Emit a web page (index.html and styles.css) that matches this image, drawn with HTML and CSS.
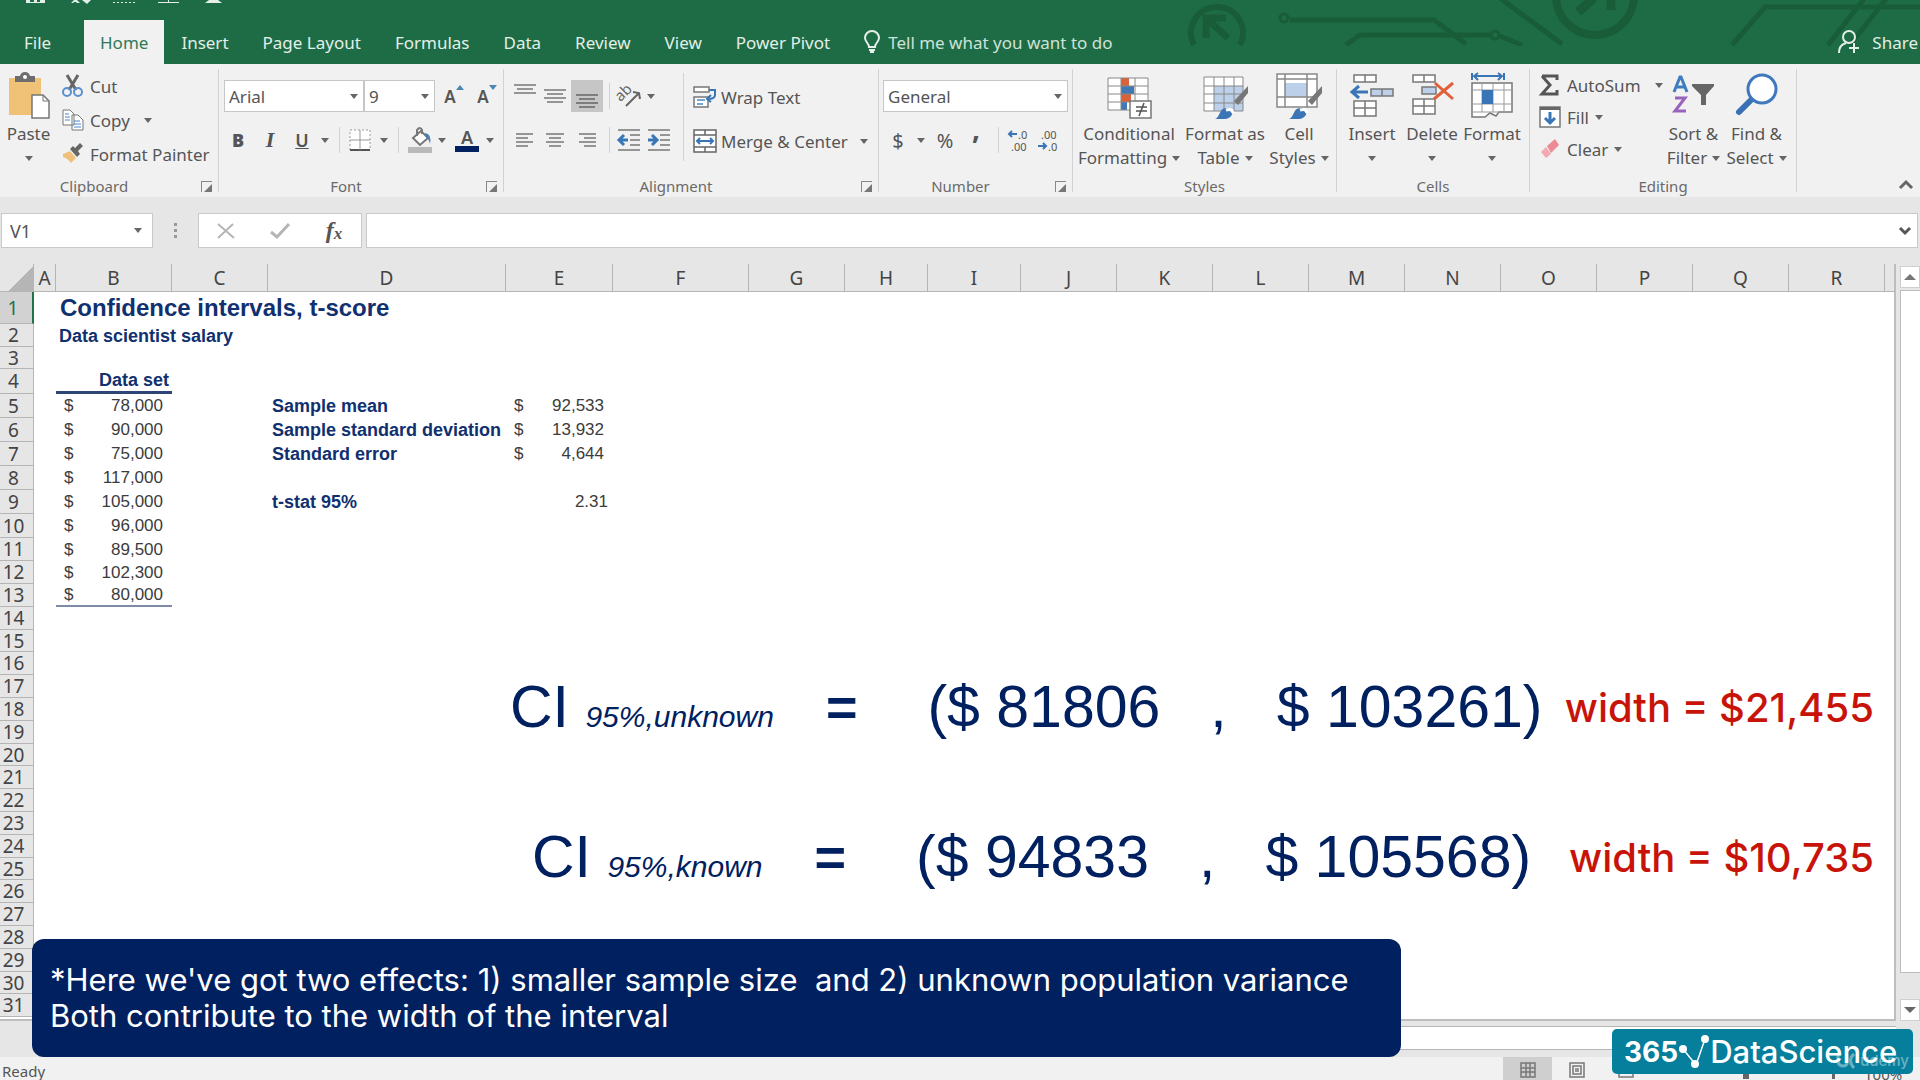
FILE: index.html
```html
<!DOCTYPE html>
<html lang="en">
<head>
  <meta charset="UTF-8" />
  <meta name="viewport" content="width=device-width, initial-scale=1.0" />
  <title>Confidence intervals, t-score</title>
  <link rel="stylesheet" href="styles.css">
</head>
<body>
  <header class="titlebar">
    <svg class="quick" width="230" height="5" viewBox="0 0 230 5" fill="#e3efe8">
      <path d="M26 0h4v2h4V0h3v2h3V0h5v3H26z" />
      <path d="M71 3l3-3h3l3 3h-3l-1-1h-2l-1 1zM82 0h9l-4 4z" />
      <path d="M113 2h2v1h-2zM117 2h2v1h-2zM121 2h2v1h-2zM125 2h2v1h-2zM129 2h2v1h-2zM133 2h2v1h-2zM158 2h21v1h-21zM168 0h1v2h-1z" />
      <path d="M205 3l4-3h9l4 3z" />
    </svg>
    <svg class="circuit" width="740" height="46" viewBox="1180 0 740 46" fill="none" stroke="#185c38" stroke-width="5">
      <path d="M1194 45a26 26 0 1 1 46 0" stroke-width="6" />
      <path d="M1206 38V18h20M1208 20l20 18" stroke-width="7" />
      <circle cx="1284" cy="18" r="4" stroke-width="3" />
      <path d="M1290 20h144l32 24M1346 45l14-10h132M1500 36l22 9" />
      <circle cx="1495" cy="35" r="4" stroke-width="3" />
      <path d="M1500 -2l62 46" />
      <circle cx="1595" cy="-4" r="39" stroke-width="8" />
      <path d="M1578 12l16-14M1611 -2v12" stroke-width="9" />
      <path d="M1732 45l33-38h155M1828 45l36-46M1850 45l36-46" />
    </svg>
    <nav class="tabs">
      <button class="tab file">File</button>
      <button class="tab active">Home</button>
      <button class="tab">Insert</button>
      <button class="tab">Page Layout</button>
      <button class="tab">Formulas</button>
      <button class="tab">Data</button>
      <button class="tab">Review</button>
      <button class="tab">View</button>
      <button class="tab">Power Pivot</button>
      <button class="tab tell">
        <svg width="16" height="24" viewBox="0 0 16 24" fill="none" stroke="#e3efe8" stroke-width="2"><path d="M5 17c0-4-4-5-4-9a7 7 0 0 1 14 0c0 4-4 5-4 9zM5 20h6M6 22h4" /></svg>
        Tell me what you want to do
      </button>
      <button class="tab share">
        <svg width="22" height="24" viewBox="0 0 22 24" fill="none" stroke="#e3efe8" stroke-width="2"><circle cx="11" cy="7" r="6" /><path d="M1 23c0-6 3-9 7-10M16 13v10M11 18h10" /></svg>
        Share
      </button>
    </nav>
  </header>

  <section class="ribbon">
    <div class="group clipboard">
      <div class="body">
        <button class="big paste">
          <svg width="44" height="48" viewBox="0 0 44 48"><path d="M2 6h32v37H2z" fill="#f0c277" /><path d="M8 4h5q1-4 5-4t5 4h5v6H8z" fill="#6d6d6d" /><circle cx="18" cy="5" r="2" fill="#fff" /><path d="M25 23h11l6 6v17H25z" fill="#fff" stroke="#777" stroke-width="1.5" /><path d="M36 23v6h6" fill="none" stroke="#777" /></svg>
          <span>Paste</span><i class="arrow"></i>
        </button>
        <div class="stack">
          <button class="small">
            <svg width="22" height="22" viewBox="0 0 22 22" fill="none" stroke-width="2"><path d="M5 0l9 15M16 0L7 15" stroke="#666" stroke-width="3" /><circle cx="5" cy="17" r="4" stroke="#5b8fcf" /><circle cx="16" cy="17" r="4" stroke="#5b8fcf" /></svg>Cut</button>
          <button class="small">
            <svg width="22" height="22" viewBox="0 0 22 22" fill="#fff" stroke="#777"><path d="M1 1h7l4 4v11H1zM10 6h6l5 5v10H10z" /><path d="M3 5h4M3 8h5M3 11h5M12 12h6M12 15h7M12 18h7" stroke="#4a86c8" /></svg>Copy<i class="arrow far"></i></button>
          <button class="small">
            <svg width="22" height="22" viewBox="0 0 22 22"><path d="M1 11l7-3 6 7-5 5c-2-3-5-5-8-6z" fill="#efc07c" /><path d="M8 6l7 8 3-3-2-3 5-5-3-3-5 5-2-2z" fill="#666" /></svg>Format Painter</button>
        </div>
      </div>
      <div class="label"><span>Clipboard</span><button class="launch" aria-label="Clipboard settings"></button></div>
    </div>

    <div class="group font">
      <div class="body lines">
        <div class="row font-top">
          <span class="combo"><select aria-label="Font"><option>Arial</option></select></span>
          <span class="combo"><select aria-label="Font size"><option>9</option></select></span>
          <button class="ic grow">A<svg width="8" height="5" viewBox="0 0 8 5"><path d="M0 5l4-5 4 5z" fill="#4a86b8" /></svg></button>
          <button class="ic grow">A<svg width="8" height="5" viewBox="0 0 8 5"><path d="M0 0h8L4 5z" fill="#4a86b8" /></svg></button>
        </div>
        <div class="row font-bottom">
          <button class="ic"><b>B</b></button>
          <button class="ic italic">I</button>
          <button class="ic under">U</button>
          <i class="arrow"></i><i class="sep"></i>
          <button class="ic" aria-label="Borders"><svg width="22" height="22" viewBox="0 0 22 22" fill="#fff" stroke="#999"><path d="M1 1h20v20H1z" stroke-dasharray="2 2" /><path d="M1 21h20" stroke="#555" stroke-width="2" /><path d="M11 1v20M1 11h20" /></svg></button>
          <i class="arrow"></i><i class="sep"></i>
          <button class="ic" aria-label="Fill color"><svg width="24" height="26" viewBox="0 0 24 26"><path d="M5 11l8-7 7 7-8 7z" fill="#fff" stroke="#777" stroke-width="2" /><path d="M9 9V3q3-4 5 0v4" fill="none" stroke="#777" stroke-width="2" /><path d="M17 6q7 1 5 11-1-5-4-7z" fill="#4a7fb5" /><path d="M0 20h24v6H0z" fill="#b9b9b9" /></svg></button>
          <i class="arrow"></i>
          <button class="ic color">A</button>
          <i class="arrow"></i>
        </div>
      </div>
      <div class="label"><span>Font</span><button class="launch" aria-label="Font settings"></button></div>
    </div>

    <div class="group alignment">
      <div class="body">
        <div class="lines">
          <div class="row align-row">
            <button class="ic" aria-label="Top align"><svg width="22" height="24" viewBox="0 0 22 24" stroke="#777" stroke-width="1.5"><path d="M0 1h22M3 5h16M0 9h22" /></svg></button>
            <button class="ic" aria-label="Middle align"><svg width="22" height="24" viewBox="0 0 22 24" stroke="#777" stroke-width="1.5"><path d="M0 6h22M3 10h16M0 14h22M3 18h16" /></svg></button>
            <button class="ic pressed" aria-label="Bottom align"><svg width="22" height="24" viewBox="0 0 22 24" stroke="#666" stroke-width="1.5"><path d="M0 11h22M3 15h16M0 19h22M3 23h16" /></svg></button>
            <i class="sep"></i>
            <button class="ic" aria-label="Orientation"><svg width="24" height="24" viewBox="0 0 24 24"><text x="0" y="14" class="ab" transform="rotate(-45 7 12)">ab</text><path d="M9 22L22 9M16 8l6 1 1 6" fill="none" stroke="#666" stroke-width="2" /></svg></button>
            <i class="arrow"></i>
          </div>
          <div class="row align-row">
            <button class="ic" aria-label="Align left"><svg width="18" height="18" viewBox="0 0 18 18" stroke="#777" stroke-width="1.5"><path d="M0 3h17M0 7h12M0 11h17M0 15h12" /></svg></button>
            <button class="ic" aria-label="Center"><svg width="18" height="18" viewBox="0 0 18 18" stroke="#777" stroke-width="1.5"><path d="M0 3h18M3 7h12M0 11h18M3 15h12" /></svg></button>
            <button class="ic" aria-label="Align right"><svg width="18" height="18" viewBox="0 0 18 18" stroke="#777" stroke-width="1.5"><path d="M1 3h17M6 7h12M1 11h17M6 15h12" /></svg></button>
            <i class="sep"></i>
            <button class="ic" aria-label="Decrease indent"><svg width="22" height="22" viewBox="0 0 22 22" stroke="#777" stroke-width="1.5"><path d="M0 1h22M12 6h10M12 11h10M12 16h10M0 21h22" /><path d="M10 11H2M6 6l-5 5 5 5" fill="none" stroke="#3a76b5" stroke-width="3" /></svg></button>
            <button class="ic" aria-label="Increase indent"><svg width="22" height="22" viewBox="0 0 22 22" stroke="#777" stroke-width="1.5"><path d="M0 1h22M12 6h10M12 11h10M12 16h10M0 21h22" /><path d="M0 11h8M4 6l5 5-5 5" fill="none" stroke="#3a76b5" stroke-width="3" /></svg></button>
          </div>
        </div>
        <i class="sep tall"></i>
        <div class="lines">
          <div class="row"><button class="small tight">
            <svg width="24" height="24" viewBox="0 0 24 24" fill="#fff" stroke="#777" stroke-width="1.5"><path d="M1 2h15v5H1zM1 12h14v10H1z" /><path d="M4 15h8M4 19h6" stroke="#4a86c8" /><path d="M16 5h6v5q0 4-7 4M18 10l-4 4 4 3" fill="none" stroke="#3a76b5" stroke-width="2" /></svg>Wrap Text</button></div>
          <div class="row"><button class="small tight">
            <svg width="24" height="24" viewBox="0 0 24 24" fill="#fff" stroke="#666" stroke-width="1.5"><path d="M1 1h22v22H1zM1 6h22M1 18h22M12 1v5M12 18v5" /><path d="M4 12h16M7 9l-3 3 3 3M17 9l3 3-3 3" fill="none" stroke="#3a76b5" stroke-width="2" /></svg>Merge &amp; Center<i class="arrow far"></i></button></div>
        </div>
      </div>
      <div class="label"><span>Alignment</span><button class="launch" aria-label="Alignment settings"></button></div>
    </div>

    <div class="group number">
      <div class="body lines">
        <div class="row"><span class="combo wide"><select aria-label="Number format"><option>General</option></select></span></div>
        <div class="row number-row">
          <button class="ic sym">$</button><i class="arrow"></i>
          <button class="ic sym">%</button>
          <button class="ic comma">,</button>
          <i class="sep"></i>
          <button class="ic" aria-label="Increase decimal"><svg width="24" height="24" viewBox="0 0 24 24"><path d="M9 6H1M4 3L1 6l3 3" fill="none" stroke="#3a76b5" stroke-width="2" /><text x="10" y="11" class="dec">.0</text><text x="3" y="23" class="dec">.00</text></svg></button>
          <button class="ic" aria-label="Decrease decimal"><svg width="24" height="24" viewBox="0 0 24 24"><path d="M0 18h8M5 15l3 3-3 3" fill="none" stroke="#3a76b5" stroke-width="2" /><text x="3" y="11" class="dec">.00</text><text x="10" y="23" class="dec">.0</text></svg></button>
        </div>
      </div>
      <div class="label"><span>Number</span><button class="launch" aria-label="Number settings"></button></div>
    </div>

    <div class="group styles">
      <div class="body">
        <button class="big">
          <svg width="46" height="48" viewBox="0 0 46 48"><path d="M2 6h40v32H2z" fill="#fff" /><path d="M15 6h8v8h-8zM15 22h10v8H15z" fill="#d9623b" /><path d="M15 14h13v8H15zM15 30h6v8h-6z" fill="#4078b5" /><path d="M2 6h40v32H2zM2 14h40M2 22h40M2 30h40M15 6v32M29 6v32" fill="none" stroke="#888" /><path d="M24 29h21v17H24z" fill="#fff" stroke="#777" stroke-width="1.5" /><path d="M30 35h11M30 39h11M38 31l-5 13" stroke="#555" stroke-width="1.5" /></svg>
          <span>Conditional</span><span>Formatting<i class="arrow"></i></span>
        </button>
        <button class="big">
          <svg width="46" height="48" viewBox="0 0 46 48"><path d="M2 5h39v34H2z" fill="#fff" /><path d="M12 14h29v25H12z" fill="#bdd0ea" /><path d="M2 5h39v34H2zM2 14h39M2 22h39M2 31h39M12 5v34M22 5v34M32 5v34" fill="none" stroke="#888" /><path d="M46 14l-14 15 4 4 10-12z" fill="#777" /><path d="M13 47c5-1 4-11 11-11 8 0 9 10-1 11z" fill="#3a76b5" /><path d="M24 38q6-2 7 3" stroke="#fff" stroke-width="3" fill="none" /></svg>
          <span>Format as</span><span>Table<i class="arrow"></i></span>
        </button>
        <button class="big">
          <svg width="46" height="48" viewBox="0 0 46 48"><path d="M1 2h40v33H1z" fill="#fff" /><path d="M9 11h22v14H9z" fill="#bdd0ea" /><path d="M1 2h40v33H1zM1 7h40M1 25h40M9 2v33M31 2v33" fill="none" stroke="#888" stroke-width="1.5" /><path d="M46 14l-14 15 4 4 10-12z" fill="#777" /><path d="M13 47c5-1 4-11 11-11 8 0 9 10-1 11z" fill="#3a76b5" /><path d="M24 38q6-2 7 3" stroke="#fff" stroke-width="3" fill="none" /></svg>
          <span>Cell</span><span>Styles<i class="arrow"></i></span>
        </button>
      </div>
      <div class="label"><span>Styles</span></div>
    </div>

    <div class="group cells">
      <div class="body">
        <button class="big">
          <svg width="46" height="48" viewBox="0 0 46 48" fill="#fff" stroke="#777" stroke-width="1.5"><path d="M5 3h22v7H5zM16 3v7M5 29h22v15H5zM5 36h22M16 29v15" /><path d="M22 17h22v7H22zM33 17v7" fill="#bdd0ea" /><path d="M19 20H4M10 14l-7 6 7 6" fill="none" stroke="#3a76b5" stroke-width="3" /></svg>
          <span>Insert</span><i class="arrow"></i>
        </button>
        <button class="big">
          <svg width="46" height="48" viewBox="0 0 46 48" fill="#fff" stroke="#777" stroke-width="1.5"><path d="M4 3h22v7H4zM15 3v7M4 27h22v15H4zM4 34h22M15 27v15" /><path d="M13 15h14v7H13z" fill="#bdd0ea" /><path d="M26 11l18 16M44 11L25 27" fill="none" stroke="#e0603a" stroke-width="3" /></svg>
          <span>Delete</span><i class="arrow"></i>
        </button>
        <button class="big">
          <svg width="46" height="48" viewBox="0 0 46 48"><path d="M3 11h40v29H30l-3 4-6-3-5 4H3z" fill="#fff" stroke="#777" stroke-width="1.5" /><path d="M3 18h40M3 32h40M13 11v29M24 11v29M35 11v29M3 40h40" stroke="#999" fill="none" /><path d="M13 18h11v14H13z" fill="#3a76b5" /><path d="M3 1v7M35 1v7M5 4h28M9 1L5 4l4 4M29 1l4 3-4 4" fill="none" stroke="#3a76b5" stroke-width="2" /></svg>
          <span>Format</span><i class="arrow"></i>
        </button>
      </div>
      <div class="label"><span>Cells</span></div>
    </div>

    <div class="group editing">
      <div class="body">
        <div class="stack">
          <button class="small"><svg width="22" height="22" viewBox="0 0 22 22"><path d="M3 2h15v4M3 2l8 9-8 9h15v-4" fill="none" stroke="#555" stroke-width="3" /></svg>AutoSum<i class="arrow far"></i></button>
          <button class="small"><svg width="22" height="22" viewBox="0 0 22 22"><path d="M1 1h20v20H1z" fill="#fff" stroke="#777" stroke-width="1.5" /><path d="M1 1h20v3H1z" fill="#666" /><path d="M11 6v11M6 12l5 5 5-5" fill="none" stroke="#3a76b5" stroke-width="3" /></svg>Fill<i class="arrow"></i></button>
          <button class="small"><svg width="22" height="22" viewBox="0 0 22 22"><path d="M8 8l8-7 4 6-8 8z" fill="#ec8b96" /><path d="M7 9l5 7-5 4-5-6z" fill="#f2a9b0" /></svg>Clear<i class="arrow"></i></button>
        </div>
        <button class="big">
          <svg width="46" height="48" viewBox="0 0 46 48" fill="none" stroke-width="3"><path d="M3 20L9 5h1l6 15M5 15h9" stroke="#3f7cc0" /><path d="M4 26h10L4 39h11" stroke="#9a63bb" /><path d="M21 12h22v2l-8 9v10h-5V23l-9-9z" fill="#666" /></svg>
          <span>Sort &amp;</span><span>Filter<i class="arrow"></i></span>
        </button>
        <button class="big">
          <svg width="46" height="48" viewBox="0 0 46 48"><path d="M17 28L5 40" stroke="#3a70b5" stroke-width="6" stroke-linecap="round" /><circle cx="28" cy="17" r="14" fill="#fff" stroke="#3f78bd" stroke-width="3" /></svg>
          <span>Find &amp;</span><span>Select<i class="arrow"></i></span>
        </button>
      </div>
      <div class="label"><span>Editing</span></div>
    </div>
    <button class="collapse" aria-label="Collapse the ribbon"><svg width="14" height="9" viewBox="0 0 14 9" fill="none" stroke="#666" stroke-width="3"><path d="M1 8l6-6 6 6" /></svg></button>
  </section>

  <section class="formula">
    <div class="namebox"><input type="text" value="V1" aria-label="Name box" /><i class="arrow"></i></div>
    <svg class="dots" width="4" height="18" viewBox="0 0 4 18" fill="#999"><path d="M0 1h3v3H0zM0 7h3v3H0zM0 13h3v3H0z" /></svg>
    <div class="fx">
      <button aria-label="Cancel"><svg width="18" height="16" viewBox="0 0 18 16" fill="none" stroke="#b5b5b5" stroke-width="2"><path d="M1 1l16 14M16 1L1 15" /></svg></button>
      <button aria-label="Enter"><svg width="20" height="16" viewBox="0 0 20 16" fill="none" stroke="#b5b5b5" stroke-width="3"><path d="M1 9l6 5L19 1" /></svg></button>
      <button class="fn">f<small>x</small></button>
    </div>
    <div class="bar"><input type="text" aria-label="Formula bar" /><svg width="12" height="8" viewBox="0 0 12 8" fill="none" stroke="#555" stroke-width="3"><path d="M1 1l5 5 5-5" /></svg></div>
  </section>

  <main class="workspace">
    <div class="sheet">
      <table>
        <colgroup>
          <col class="c-num"><col class="c-a"><col class="c-b"><col class="c-std"><col class="c-d"><col class="c-e"><col class="c-f"><col class="c-std"><col class="c-h"><col class="c-i"><col class="c-std"><col class="c-std"><col class="c-std"><col class="c-std"><col class="c-std"><col class="c-std"><col class="c-std"><col class="c-std"><col class="c-std"><col>
        </colgroup>
        <thead>
          <tr><th class="corner"></th><th>A</th><th>B</th><th>C</th><th>D</th><th>E</th><th>F</th><th>G</th><th>H</th><th>I</th><th>J</th><th>K</th><th>L</th><th>M</th><th>N</th><th>O</th><th>P</th><th>Q</th><th>R</th><th></th></tr>
        </thead>
        <tbody>
          <tr class="r-title"><th class="selected">1</th><td></td><td class="title" colspan="18">Confidence intervals, t-score</td></tr>
          <tr><th>2</th><td></td><td class="head sub" colspan="18">Data scientist salary</td></tr>
          <tr class="short"><th>3</th><td colspan="19"></td></tr>
          <tr class="r-head"><th>4</th><td></td><td class="head right line">Data set</td><td colspan="17"></td></tr>
          <tr class="mid"><th>5</th><td></td><td><span class="money"><i>$</i>78,000</span></td><td></td><td class="head">Sample mean</td><td><span class="money"><i>$</i>92,533</span></td><td colspan="14"></td></tr>
          <tr class="mid"><th>6</th><td></td><td><span class="money"><i>$</i>90,000</span></td><td></td><td class="head">Sample standard deviation</td><td><span class="money"><i>$</i>13,932</span></td><td colspan="14"></td></tr>
          <tr class="mid"><th>7</th><td></td><td><span class="money"><i>$</i>75,000</span></td><td></td><td class="head">Standard error</td><td><span class="money"><i>$</i>4,644</span></td><td colspan="14"></td></tr>
          <tr class="mid"><th>8</th><td></td><td><span class="money"><i>$</i>117,000</span></td><td colspan="17"></td></tr>
          <tr class="mid"><th>9</th><td></td><td><span class="money"><i>$</i>105,000</span></td><td></td><td class="head">t-stat 95%</td><td class="right">2.31</td><td colspan="14"></td></tr>
          <tr class="mid"><th>10</th><td></td><td><span class="money"><i>$</i>96,000</span></td><td colspan="17"></td></tr>
          <tr><th>11</th><td></td><td><span class="money"><i>$</i>89,500</span></td><td colspan="17"></td></tr>
          <tr><th>12</th><td></td><td><span class="money"><i>$</i>102,300</span></td><td colspan="17"></td></tr>
          <tr><th>13</th><td></td><td class="line end"><span class="money"><i>$</i>80,000</span></td><td colspan="17"></td></tr>
          <tr><th>14</th><td colspan="19"></td></tr>
          <tr class="short"><th>15</th><td colspan="19"></td></tr>
          <tr><th>16</th><td colspan="19"></td></tr>
          <tr><th>17</th><td colspan="19"></td></tr>
          <tr><th>18</th><td colspan="19"></td></tr>
          <tr><th>19</th><td colspan="19"></td></tr>
          <tr class="short"><th>20</th><td colspan="19"></td></tr>
          <tr><th>21</th><td colspan="19"></td></tr>
          <tr><th>22</th><td colspan="19"></td></tr>
          <tr><th>23</th><td colspan="19"></td></tr>
          <tr><th>24</th><td colspan="19"></td></tr>
          <tr class="short"><th>25</th><td colspan="19"></td></tr>
          <tr><th>26</th><td colspan="19"></td></tr>
          <tr><th>27</th><td colspan="19"></td></tr>
          <tr><th>28</th><td colspan="19"></td></tr>
          <tr><th>29</th><td colspan="19"></td></tr>
          <tr class="short"><th>30</th><td colspan="19"></td></tr>
          <tr><th>31</th><td colspan="19"></td></tr>
        </tbody>
      </table>

      <div class="results">
        <p class="ci"><span>CI <em>95%,unknown</em></span><b>=</b><span>($ 81806</span><span class="comma-gap">,</span><span>$ 103261)</span><strong>width = $21,455</strong></p>
        <p class="ci known"><span>CI <em>95%,known</em></span><b>=</b><span>($ 94833</span><span class="comma-gap">,</span><span>$ 105568)</span><strong>width = $10,735</strong></p>
      </div>
    </div>
    <div class="scroll">
      <button aria-label="Scroll up"><svg width="12" height="6" viewBox="0 0 12 6"><path d="M0 6l6-6 6 6z" fill="#777" /></svg></button>
      <div class="thumb"></div>
      <button aria-label="Scroll down"><svg width="12" height="6" viewBox="0 0 12 6"><path d="M0 0h12L6 6z" fill="#666" /></svg></button>
    </div>
  </main>

  <div class="sheet-tabs"><div class="strip"></div></div>

  <footer class="status">
    <span class="ready">Ready</span>
    <button class="view on" aria-label="Normal"><svg width="16" height="16" viewBox="0 0 16 16" fill="none" stroke="#777" stroke-width="1.5"><path d="M1 1h14v14H1zM1 6h14M1 10h14M6 1v14M10 1v14" /></svg></button>
    <button class="view" aria-label="Page layout"><svg width="16" height="16" viewBox="0 0 16 16" fill="none" stroke="#777" stroke-width="1.5"><path d="M1 1h14v14H1zM4 4h8v8H4zM6 7h4M6 9h4" /></svg></button>
    <button class="view" aria-label="Page break"><svg width="16" height="16" viewBox="0 0 16 16" fill="none" stroke="#777" stroke-width="1.5"><path d="M1 1h14v14H1zM1 8h5V1M10 1v7h5" /></svg></button>
    <svg class="zoom" width="160" height="22" viewBox="0 0 160 22" fill="#666"><path d="M67 15h6v7h-6zM156 15h3v7h-3z" /></svg>
    <span class="percent">100%</span>
  </footer>

  <aside class="note">*Here we've got two effects: 1) smaller sample size &nbsp;and 2) unknown population variance<br>Both contribute to the width of the interval</aside>

  <div class="brand">
    <b>365</b>
    <svg width="32" height="36" viewBox="0 0 32 36" fill="#fff"><path d="M5 15l13 16 9-26" fill="none" stroke="#fff" stroke-width="1.5" /><circle cx="5" cy="15" r="4" /><circle cx="17" cy="30" r="4" /><circle cx="27" cy="5" r="4" /></svg>
    <span>DataScience</span>
    <small class="mark"><svg width="20" height="18" viewBox="0 0 20 18" fill="none" stroke="#fff" stroke-width="3"><path d="M2 2v7a5 5 0 0 0 9 3V2M18 2q-7 6 0 14" /></svg>udemy</small>
  </div>
</body>
</html>
```
FILE: styles.css
```css
* {
  box-sizing: border-box;
}
body {
  margin: 0;
  height: 100vh;
  display: flex;
  flex-direction: column;
  overflow: hidden;
  position: relative;
  background: #e6e6e6;
  color: #555;
  font-family: "Noto Sans", "Open Sans", sans-serif;
  font-size: 17px;
}
button, input, select {
  font: inherit;
  color: inherit;
  background: none;
  border: none;
  border-radius: 0;
  padding: 0;
  margin: 0;
  outline: none;
}
svg {
  display: block;
  flex: none;
  overflow: visible;
}

/* title bar and tabs */
.titlebar {
  flex: none;
  position: relative;
  height: 64px;
  background: #1e6c46;
  color: #e3efe8;
}
.quick {
  position: absolute;
  left: 0;
  top: 0;
}
.circuit {
  position: absolute;
  right: 0;
  top: 0;
  overflow: hidden;
}
.tabs {
  position: relative;
  display: flex;
  padding-top: 20px;
}
.tab {
  height: 44px;
  padding: 0 17px;
  display: flex;
  align-items: center;
  white-space: nowrap;
}
.tab.file {
  width: 84px;
  padding-left: 24px;
}
.tab.active {
  background: #f1f1f1;
  color: #2f7a57;
  padding: 0 16px;
}
.tab.tell {
  gap: 8px;
  color: #cfe2d7;
}
.tab.share {
  gap: 12px;
  margin-left: auto;
  padding: 0 2px;
}

/* ribbon */
.ribbon {
  flex: none;
  display: flex;
  height: 133px;
  padding: 5px 0;
  background: #f1f1f1;
}
.group {
  display: flex;
  flex-direction: column;
  border-right: 1px solid #d2d2d2;
}
.clipboard { width: 219px; }
.font { width: 285px; }
.alignment { width: 375px; }
.number { width: 194px; }
.styles { width: 264px; }
.cells { width: 193px; }
.editing { width: 267px; }
.body {
  flex: 1;
  min-height: 0;
  display: flex;
}
.label {
  flex: none;
  position: relative;
  height: 16px;
  line-height: 20px;
  padding-right: 30px;
  font-size: 15px;
  text-align: center;
  color: #6a6a6a;
}
.styles .label, .cells .label, .editing .label {
  padding-right: 0;
}
.launch {
  position: absolute;
  right: 6px;
  top: 5px;
  width: 11px;
  height: 11px;
  border: solid #888;
  border-width: 1px 0 0 1px;
}
.launch::after {
  content: "";
  position: absolute;
  right: 0;
  bottom: 0;
  border: 4px solid transparent;
  border-right-color: #777;
  border-bottom-color: #777;
}
.arrow {
  display: inline-block;
  flex: none;
  width: 8px;
  border: 4px solid transparent;
  border-top: 5px solid #666;
  border-bottom: none;
}
.sep {
  width: 1px;
  height: 26px;
  background: #d2d2d2;
}
.sep.tall {
  height: 88px;
  margin: 4px 9px 0 18px;
}
.big {
  display: flex;
  flex-direction: column;
  align-items: center;
  line-height: 24px;
  padding-top: 3px;
  white-space: nowrap;
}
.big svg {
  margin-bottom: 2px;
}
.big > .arrow {
  margin-top: 10px;
}
.big span .arrow {
  margin: 0 0 3px 5px;
}
.paste {
  width: 57px;
}
.stack {
  display: flex;
  flex-direction: column;
  padding-left: 5px;
}
.small {
  display: flex;
  flex: none;
  align-items: center;
  gap: 6px;
  height: 34px;
  white-space: nowrap;
}
.small .far {
  margin-left: 8px;
}
.small.tight {
  gap: 4px;
}
.editing .small {
  height: 32px;
}
.lines {
  display: flex;
  flex-direction: column;
  gap: 12px;
  padding-top: 11px;
}
.row {
  flex: none;
  height: 32px;
  display: grid;
  align-items: center;
  justify-items: center;
  justify-content: start;
}
.ic {
  display: flex;
  align-items: center;
  justify-content: center;
}
.font .lines {
  padding-left: 5px;
}
.font-top {
  grid-template-columns: 140px 71px 38px 28px;
}
.font-bottom {
  grid-template-columns: 28px 36px 28px 18px 10px 32px 16px 12px 32px 12px 38px 8px;
}
.combo {
  position: relative;
  width: 100%;
}
.combo.wide {
  width: 185px;
}
.combo select {
  appearance: none;
  display: block;
  width: 100%;
  height: 32px;
  padding: 0 4px;
  background: #fff;
  border: 1px solid #c6c6c6;
}
.combo::after, .namebox .arrow {
  content: "";
  position: absolute;
  right: 6px;
  top: 14px;
  border: 4px solid transparent;
  border-top: 5px solid #666;
  border-bottom: none;
}
.grow {
  align-items: flex-start;
  font-weight: 600;
}
.font-bottom .ic {
  font-size: 18px;
  font-weight: 600;
}
.font-bottom .italic {
  font-family: "Liberation Serif", serif;
  font-style: italic;
  font-weight: 700;
  font-size: 22px;
}
.under {
  text-decoration: underline;
}
.font-bottom .color {
  height: 24px;
  width: 24px;
  border-bottom: 6px solid #002060;
  line-height: 18px;
}
.alignment .lines {
  padding-left: 6px;
}
.alignment .lines + .sep + .lines {
  padding-left: 0;
}
.align-row {
  grid-template-columns: 29px 32px 32px 12px 28px 32px;
  width: 155px;
}
.align-row .arrow {
  justify-self: start;
  margin-left: 4px;
}
.pressed {
  width: 32px;
  height: 32px;
  background: #c6c6c6;
}
.ab {
  font-size: 15px;
  fill: #666;
}
.dec {
  font-size: 11px;
  fill: #555;
}
.number .lines {
  padding-left: 4px;
}
.number-row {
  grid-template-columns: 30px 16px 32px 30px 14px 30px 30px;
}
.sym {
  font-size: 20px;
}
.comma {
  align-items: flex-start;
  height: 32px;
  font-size: 28px;
  font-weight: 700;
  line-height: 8px;
}
.styles .body {
  display: grid;
  grid-template-columns: 112px 80px 68px;
}
.cells .body {
  display: grid;
  grid-template-columns: 60px 60px 60px;
  padding-left: 5px;
}
.editing .stack {
  width: 132px;
  padding-left: 9px;
}
.editing .big {
  width: 63px;
}
.collapse {
  margin-left: auto;
  align-self: flex-end;
  padding: 0 7px 3px 0;
}

/* formula bar */
.formula {
  flex: none;
  display: flex;
  align-items: center;
  height: 67px;
  padding: 0 2px 0 1px;
}
.formula > div {
  height: 35px;
  background: #fff;
  border: 1px solid #c9c9c9;
}
.formula input {
  width: 100%;
  height: 33px;
  font-size: 18px;
}
.namebox {
  position: relative;
  width: 152px;
  padding-left: 8px;
}
.namebox .arrow {
  right: 10px;
}
.dots {
  margin: 0 20px 0 21px;
}
.fx {
  display: flex;
  width: 164px;
}
.fx button {
  width: 54px;
  display: flex;
  align-items: center;
  justify-content: center;
}
.fx .fn {
  font-family: "Liberation Serif", serif;
  font-style: italic;
  font-weight: 700;
  font-size: 24px;
}
.fn small {
  font-size: 17px;
  padding-top: 6px;
}
.bar {
  flex: 1;
  display: flex;
  align-items: center;
  margin-left: 4px;
  padding-right: 6px;
}

/* worksheet */
.workspace {
  flex: 1;
  min-height: 0;
  display: flex;
}
.sheet {
  position: relative;
  flex: 1;
  background: #fff;
  border-right: 2px solid #bdbdbd;
  border-bottom: 2px solid #bdbdbd;
  overflow: hidden;
}
table {
  width: 100%;
  table-layout: fixed;
  border-collapse: separate;
  border-spacing: 0;
  color: #3c3c3c;
  font-family: "Liberation Sans", Arial, sans-serif;
  font-size: 17px;
}
.c-num { width: 34px; }
.c-a { width: 22px; }
.c-b { width: 116px; }
.c-std { width: 96px; }
.c-d { width: 238px; }
.c-e { width: 107px; }
.c-f { width: 136px; }
.c-h { width: 83px; }
.c-i { width: 93px; }
th {
  padding: 0;
  background: #e6e6e6;
  border-right: 1px solid #b5b5b5;
  border-bottom: 1px solid #b5b5b5;
  color: #444;
  font-family: "Noto Sans", "Open Sans", sans-serif;
  font-size: 19px;
  font-weight: 400;
  line-height: 20px;
}
thead th {
  height: 28px;
}
thead th:last-child {
  border-right: none;
}
tbody th {
  padding-right: 6px;
}
.corner {
  background: linear-gradient(135deg, #e6e6e6 60%, #b5b5b5 60%);
}
.selected {
  background: #d2d2d2;
  border-right: 2px solid #217346;
  color: #217346;
}
tbody tr { height: 23px; }
tbody .short { height: 22px; }
tbody .mid { height: 24px; }
tbody .r-title { height: 32px; }
tbody .r-head { height: 25px; }
td {
  padding: 0 5px;
  line-height: 20px;
  white-space: nowrap;
}
.title, .head {
  color: #10306f;
  font-weight: 700;
}
.head {
  padding: 0 4px;
  font-size: 18px;
}
.title {
  padding: 0 4px;
  font-size: 24px;
  line-height: 30px;
}
.sub {
  padding: 0 3px;
}
.right {
  text-align: right;
}
.line {
  padding: 0 3px;
  border-bottom: 3px solid #2d4677;
}
.line.end {
  padding: 0 5px;
  border-bottom: 2px solid #7d8ba6;
}
.money {
  display: flex;
  justify-content: space-between;
  padding: 0 4px 0 3px;
}
.money i {
  font-style: normal;
}

.results {
  position: absolute;
  left: 510px;
  right: 20px;
  top: 400px;
  color: #002060;
  font-family: "Liberation Sans", Arial, sans-serif;
  font-size: 59px;
}
.ci {
  display: flex;
  align-items: center;
  height: 86px;
  margin: 0 0 64px;
  white-space: pre;
}
.ci.known {
  padding-left: 22px;
}
.ci em {
  font-size: 30px;
}
.ci b {
  margin: 0 70px 0 52px;
  font-size: 54px;
}
.comma-gap {
  margin: 0 50px;
}
.ci strong {
  margin-left: auto;
  color: #c81408;
  font-family: Inter, sans-serif;
  font-size: 40px;
  font-weight: 500;
}

.scroll {
  display: flex;
  flex-direction: column;
  width: 24px;
  padding: 2px 0 0 4px;
}
.scroll button {
  display: flex;
  align-items: center;
  justify-content: center;
  height: 22px;
  background: #fff;
  border: 1px solid #cfcfcf;
}
.thumb {
  flex: 1;
  margin: 2px 0 26px;
  background: #fff;
  border: 1px solid #bdbdbd;
  border-right: none;
}

.sheet-tabs {
  flex: none;
  height: 36px;
  padding: 5px 24px 0 34px;
}
.strip {
  height: 24px;
  background: #fff;
  border: solid #b5b5b5;
  border-width: 1px 0;
}

/* status bar */
.status {
  flex: none;
  display: flex;
  height: 23px;
  padding-right: 20px;
  background: #f1f1f1;
  overflow: hidden;
}
.ready {
  flex: 1;
  padding-left: 2px;
  font-size: 15px;
  line-height: 28px;
}
.view {
  width: 49px;
  display: flex;
  justify-content: center;
  padding-top: 5px;
}
.view.on {
  background: #cfcfcf;
}
.zoom {
  margin-left: 26px;
}
.percent {
  padding-left: 28px;
  width: 64px;
  font-size: 15px;
  line-height: 34px;
}

/* panels over the workbook */
.note {
  position: absolute;
  left: 32px;
  bottom: 23px;
  height: 118px;
  padding: 23px 52px 0 18px;
  background: #002060;
  border-radius: 12px;
  color: #fff;
  font-family: Inter, sans-serif;
  font-size: 31px;
  line-height: 36px;
  white-space: nowrap;
}
.brand {
  position: absolute;
  right: 7px;
  bottom: 6px;
  width: 301px;
  height: 45px;
  padding-left: 12px;
  display: flex;
  align-items: center;
  background: #067f9c;
  border-radius: 5px;
  color: #fff;
  font-family: Inter, sans-serif;
  font-size: 28px;
  font-weight: 500;
}
.brand span {
  font-size: 31px;
}
.mark {
  position: absolute;
  right: 4px;
  bottom: 4px;
  display: flex;
  align-items: center;
  gap: 4px;
  font-size: 15px;
  opacity: 0.4;
}
```
